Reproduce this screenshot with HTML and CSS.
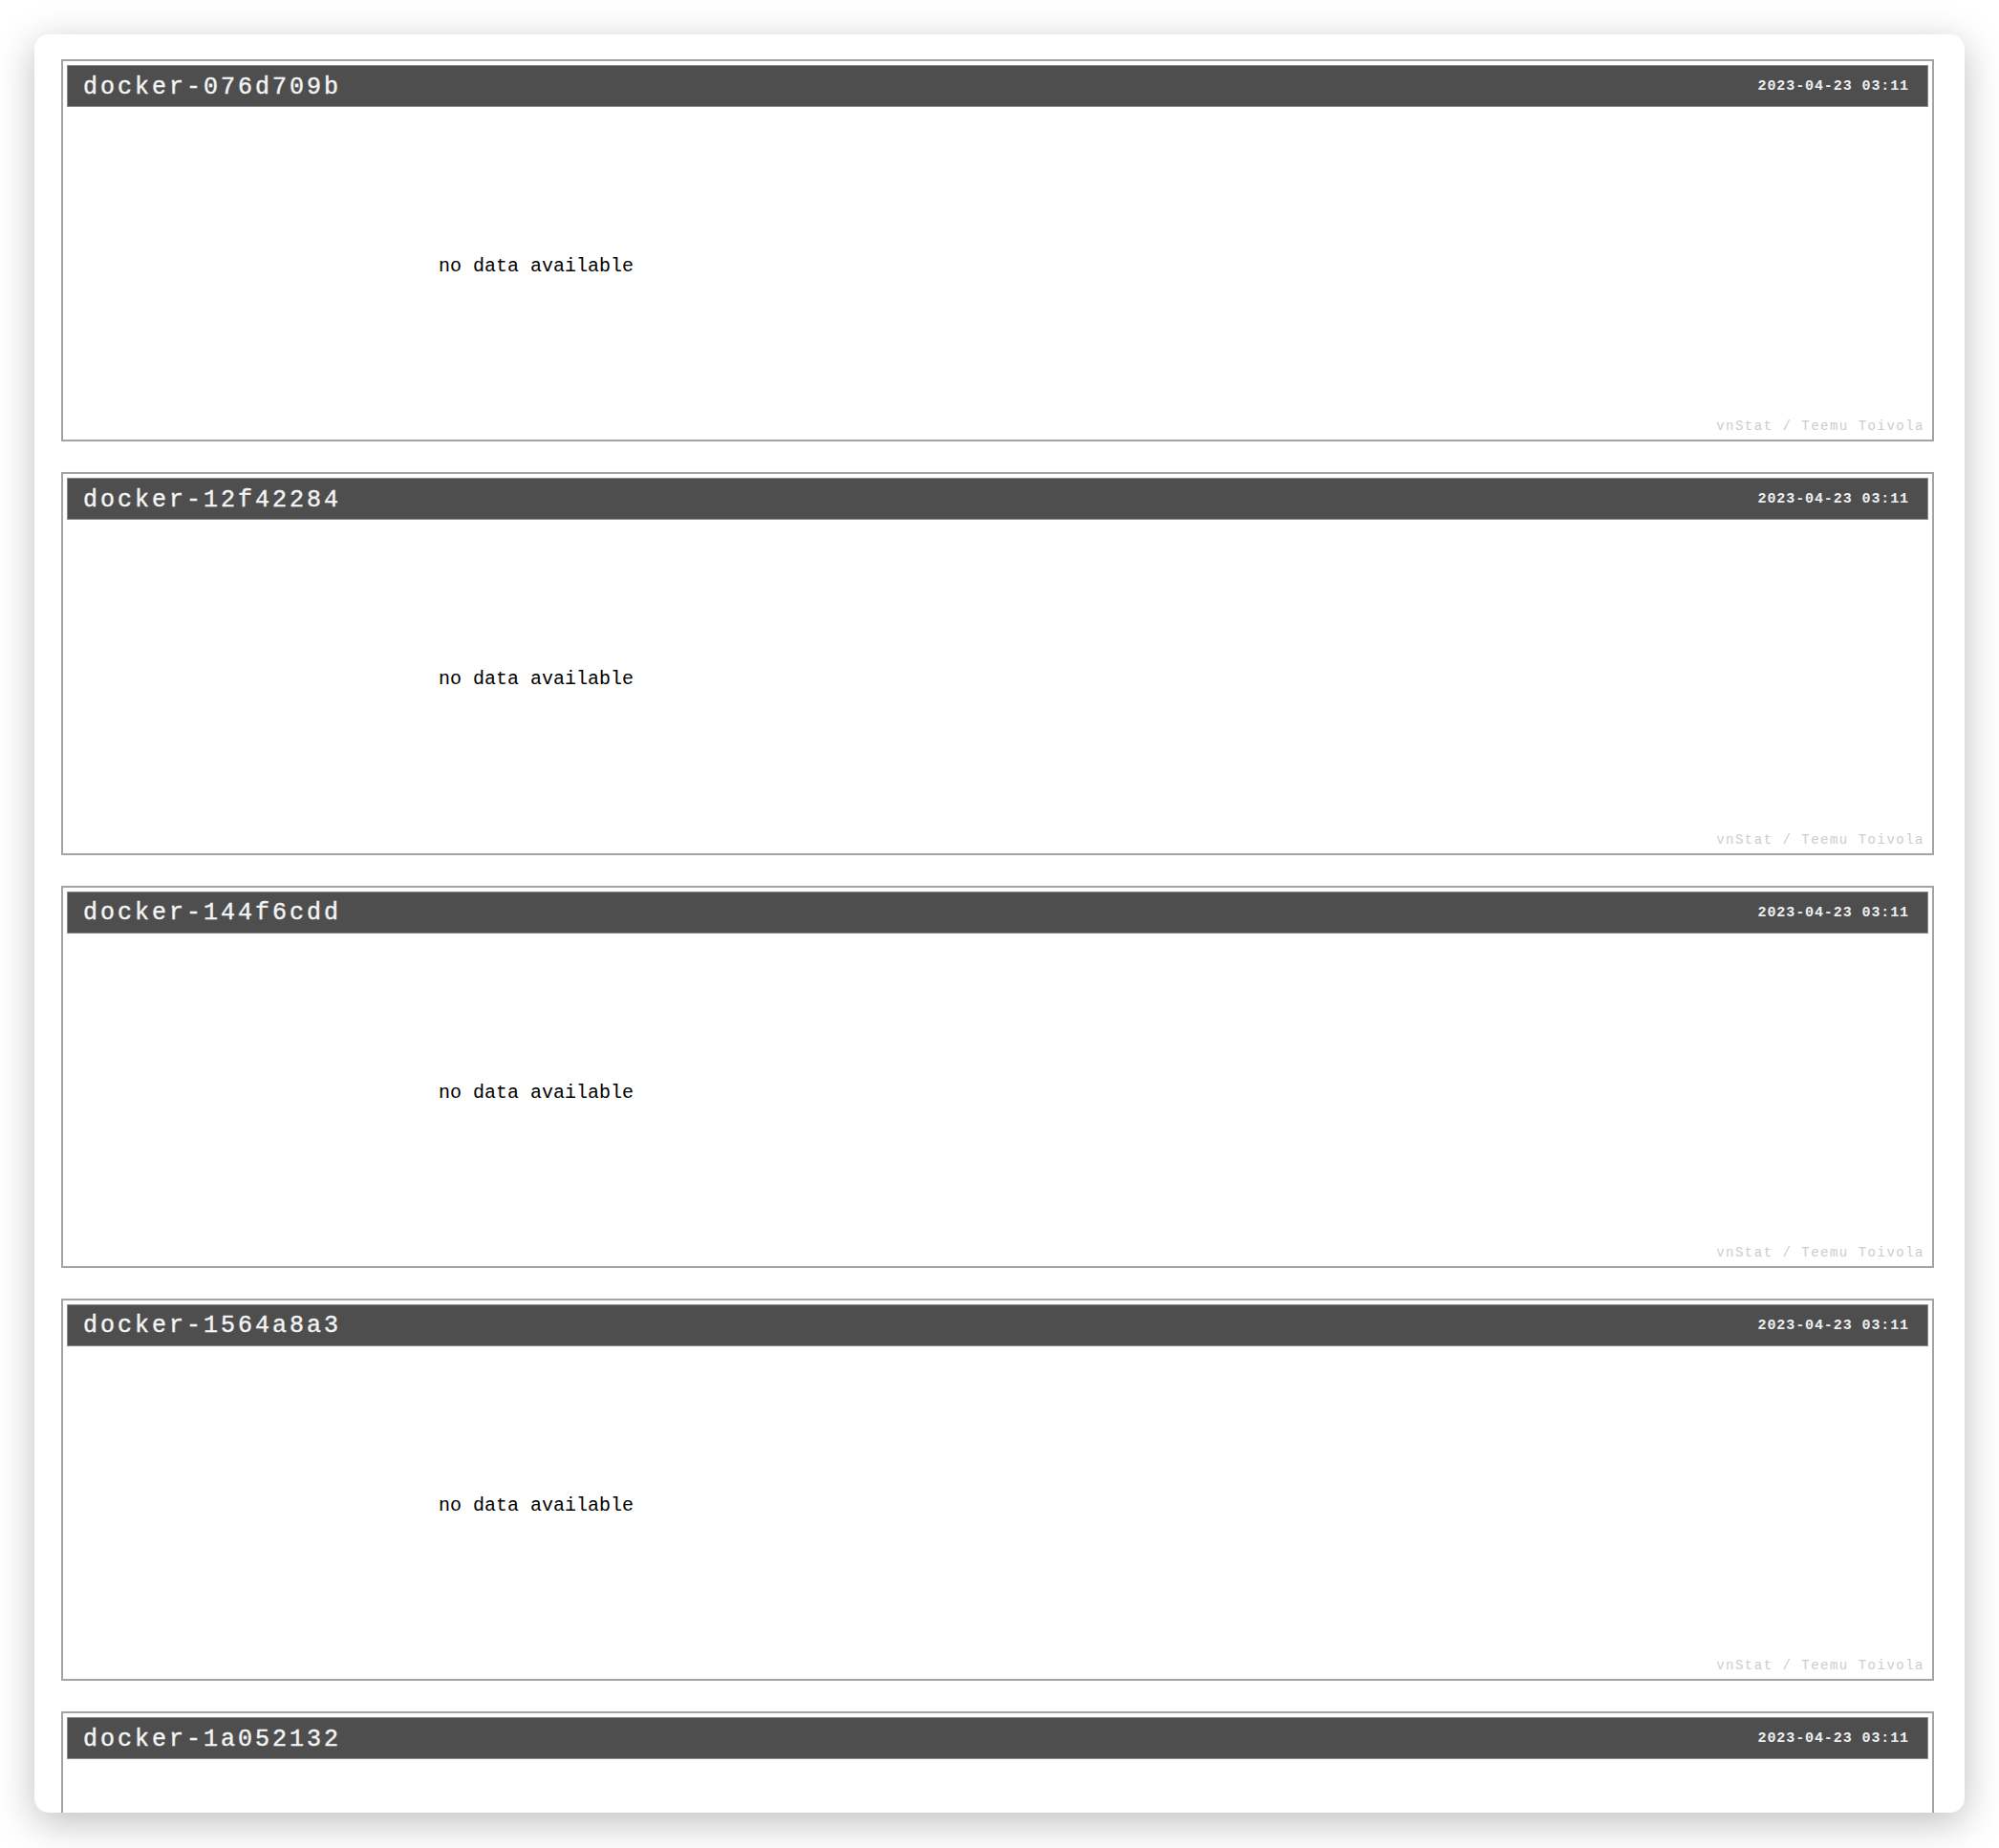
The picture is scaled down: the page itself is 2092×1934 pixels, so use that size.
FILE: index.html
```html
<!DOCTYPE html>
<html>
<head>
<meta charset="utf-8">
<link rel="stylesheet" href="styles.css">
</head>
<body>
<div class="card">
  <div class="panel">
    <div class="bar"><span class="title">docker-076d709b</span><span class="date">2023-04-23 03:11</span></div>
    <div class="msg">no data available</div>
    <div class="credit">vnStat / Teemu Toivola</div>
  </div>
  <div class="panel">
    <div class="bar"><span class="title">docker-12f42284</span><span class="date">2023-04-23 03:11</span></div>
    <div class="msg">no data available</div>
    <div class="credit">vnStat / Teemu Toivola</div>
  </div>
  <div class="panel">
    <div class="bar"><span class="title">docker-144f6cdd</span><span class="date">2023-04-23 03:11</span></div>
    <div class="msg">no data available</div>
    <div class="credit">vnStat / Teemu Toivola</div>
  </div>
  <div class="panel">
    <div class="bar"><span class="title">docker-1564a8a3</span><span class="date">2023-04-23 03:11</span></div>
    <div class="msg">no data available</div>
    <div class="credit">vnStat / Teemu Toivola</div>
  </div>
  <div class="panel">
    <div class="bar"><span class="title">docker-1a052132</span><span class="date">2023-04-23 03:11</span></div>
  </div>
</div>
</body>
</html>
```
FILE: styles.css
```css
html, body {
  margin: 0;
  padding: 0;
  background: #ffffff;
}
body {
  padding: 36px 36px 0 36px;
  height: 1934px;
  box-sizing: border-box;
  overflow: hidden;
}
.card {
  width: 2020px;
  height: 1861px;
  box-sizing: border-box;
  background: #ffffff;
  border-radius: 15px;
  box-shadow: 0 10px 40px rgba(0, 0, 0, 0.26);
  overflow: hidden;
  padding: 26px 28px 0 28px;
  display: flex;
  flex-direction: column;
  gap: 32px;
}
.panel {
  flex: none;
  width: 1960px;
  height: 400.3px;
  box-sizing: border-box;
  border: 2px solid #a4a4a4;
  padding: 4px;
  display: flex;
  flex-direction: column;
  font-family: "Liberation Mono", "DejaVu Sans Mono", monospace;
}
.bar {
  height: 44px;
  box-sizing: border-box;
  background: #4e4e4e;
  border: 1px solid #8c8c8c;
  display: flex;
  align-items: center;
  justify-content: space-between;
  padding: 3px 19px 0 16px;
}
.title {
  color: #f4f4f4;
  font-size: 25px;
  letter-spacing: 3px;
  line-height: 28px;
  -webkit-text-stroke: 0.4px #f4f4f4;
}
.date {
  color: #eeeeee;
  font-size: 15px;
  font-weight: bold;
  letter-spacing: 0.9px;
  line-height: 18px;
  margin-top: -1px;
}
.msg {
  margin: 155px 0 0 389px;
  color: #000000;
  font-size: 20px;
  line-height: 24px;
}
.credit {
  margin-top: auto;
  align-self: flex-end;
  color: #cccccc;
  font-size: 14px;
  letter-spacing: 1.5px;
  line-height: 16px;
  padding: 0 4px 2px 0;
}
```
